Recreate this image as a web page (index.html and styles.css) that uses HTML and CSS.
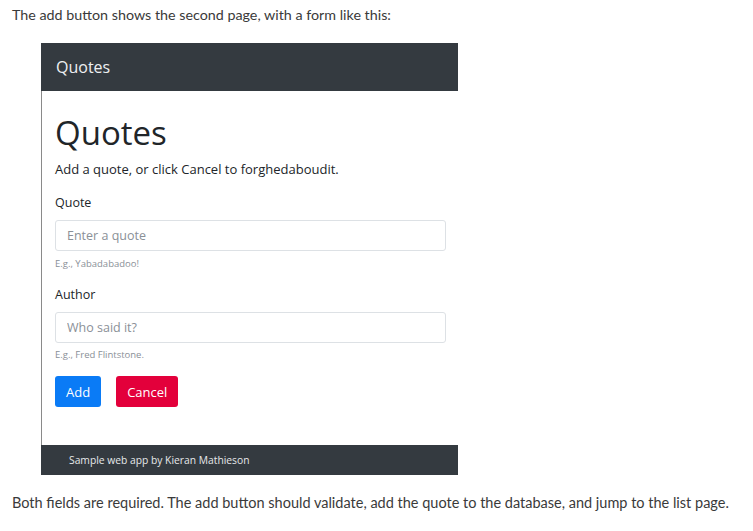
FILE: index.html
```html
<!DOCTYPE html>
<html>
  <head>
    <meta name="viewport" content="width=device-width, initial-scale=1.0" />
    <link rel="stylesheet" href="styles.css">
  </head>
  <body>
    <p class="prose">The add button shows the second page, with a form like this:</p>

    <div class="shot">
      <header class="navbar">Quotes</header>

      <main class="content">
        <h1>Quotes</h1>
        <p class="lead">Add a quote, or click Cancel to forghedaboudit.</p>

        <form class="quote-form">
          <label for="quote">Quote</label>
          <input id="quote" type="text" placeholder="Enter a quote" />
          <small class="help">E.g., Yabadabadoo!</small>

          <label for="author" class="second">Author</label>
          <input id="author" type="text" placeholder="Who said it?" />
          <small class="help help-last">E.g., Fred Flintstone.</small>

          <div class="buttons">
            <button type="button" class="btn btn-primary">Add</button>
            <button type="button" class="btn btn-danger">Cancel</button>
          </div>
        </form>
      </main>

      <footer class="footer">Sample web app by Kieran Mathieson</footer>
    </div>

    <p class="prose prose-after">Both fields are required. The add button should validate, add the quote to the database, and jump to the list page.</p>
  </body>
</html>
```

FILE: styles.css
```css
:root {
  --dark: #343a40;
  --text: #212529;
  --muted: #6c757d;
  --border: #ced4da;
  --primary: #0a7bf6;
  --danger: #e3003b;
}

* {
  box-sizing: border-box;
  margin: 0;
  padding: 0;
}

body {
  background: #fff;
  color: #333;
  font-family: Lato, "Liberation Sans", sans-serif;
}

.prose {
  font-size: 14.3px;
  line-height: 20px;
  padding: 5px 0 0 12px;
  color: #3a3a3a;
  white-space: nowrap;
}

.prose-after {
  padding-top: 18px;
  font-size: 14.5px;
}

/* Screenshot of the app */
.shot {
  width: 417px;
  margin: 18px 0 0 41px;
  font-family: "Open Sans", "Noto Sans", sans-serif;
  color: var(--text);
}

.navbar {
  height: 48px;
  background: var(--dark);
  color: #eef0f2;
  font-size: 16px;
  line-height: 48px;
  padding-left: 15px;
}

.content {
  border-left: 1px solid #8a8a8a;
  padding: 24px 13px 38px 13px;
}

.content h1 {
  font-size: 33px;
  font-weight: 500;
  line-height: 36px;
}

.lead {
  margin-top: 9px;
  font-size: 13px;
  line-height: 18px;
}

.quote-form {
  display: flex;
  flex-direction: column;
}

.quote-form label {
  margin-top: 16px;
  font-size: 12.5px;
  line-height: 18px;
}

.quote-form label.second {
  margin-top: 15px;
}

.quote-form input {
  margin-top: 8px;
  width: 391px;
  height: 31px;
  border: 1px solid #dde1e5;
  border-radius: 3px;
  padding: 0 11px;
  font-family: inherit;
  font-size: 12.5px;
  color: var(--text);
}

.quote-form input::placeholder {
  color: #8a9097;
}

.help {
  margin-top: 6px;
  font-size: 9.5px;
  line-height: 14px;
  color: #8a9097;
}

.help-last {
  margin-top: 5px;
}

.buttons {
  display: flex;
  gap: 15px;
  margin-top: 14px;
}

.btn {
  height: 31px;
  border: none;
  border-radius: 3px;
  padding: 0 11px;
  font-family: inherit;
  font-size: 13px;
  color: #fff;
}

.btn-primary {
  background: var(--primary);
}

.btn-danger {
  background: var(--danger);
}

.footer {
  height: 30px;
  background: var(--dark);
  color: #e6e8ea;
  font-size: 10.3px;
  line-height: 30px;
  padding-left: 28px;
}
```
